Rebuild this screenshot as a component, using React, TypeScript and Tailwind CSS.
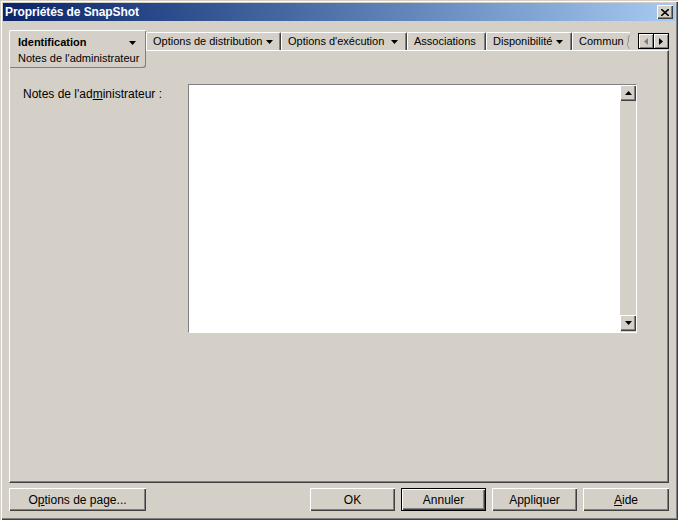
import React from 'react';

const font = { fontFamily: '"Liberation Sans", Arial, sans-serif' };

function Caret({ muted = false }: { muted?: boolean }) {
  return (
    <svg width="7" height="4" viewBox="0 0 7 4" className="shrink-0">
      <path d="M0 0h7L3.5 4z" fill={muted ? '#808080' : '#000'} />
    </svg>
  );
}

function Tab({ label, w, caret = false }: { label: string; w: string; caret?: boolean }) {
  return (
    <div
      className={`${w} h-[18px] flex items-center justify-between gap-[4px] pl-[6px] pr-[8px] border-l border-t border-r border-l-white border-t-white border-r-[#404040] rounded-t-[2px] shadow-[inset_-1px_0_#808080] shrink-0`}
    >
      <span className="whitespace-nowrap">{label}</span>
      {caret && <Caret />}
    </div>
  );
}

function Button({ children, w, isDefault = false }: { children: React.ReactNode; w: string; isDefault?: boolean }) {
  return (
    <div
      className={`${w} h-[23px] flex items-center justify-center ${
        isDefault
          ? 'border border-black shadow-[inset_1px_1px_#fff,inset_-1px_-1px_#404040,inset_-2px_-2px_#808080]'
          : 'shadow-[inset_1px_1px_#fff,inset_-1px_-1px_#404040,inset_-2px_-2px_#808080]'
      }`}
    >
      {children}
    </div>
  );
}

function ScrollBtn({ up }: { up: boolean }) {
  return (
    <div className="w-[16px] h-[16px] flex items-center justify-center shadow-[inset_1px_1px_#fff,inset_-1px_-1px_#404040,inset_-2px_-2px_#808080]">
      <svg width="7" height="4" viewBox="0 0 7 4">
        <path d={up ? 'M0 4h7L3.5 0z' : 'M0 0h7L3.5 4z'} fill="#000" />
      </svg>
    </div>
  );
}

export default function App() {
  return (
    <div
      style={font}
      className="w-[678px] h-[520px] bg-[#d4d0c8] text-[11px] text-black p-[3px] flex flex-col shadow-[inset_1px_1px_#d4d0c8,inset_2px_2px_#fff,inset_-1px_-1px_#404040,inset_-2px_-2px_#808080]"
    >
      {/* title bar */}
      <div className="h-[18px] flex items-center justify-between pl-[2px] pr-[2px] bg-gradient-to-r from-[#0a246a] to-[#a6caf0]">
        <span className="text-white font-bold text-[12px] tracking-[-0.1px]">Propriétés de SnapShot</span>
        <div className="w-[16px] h-[14px] bg-[#d4d0c8] flex items-center justify-center shadow-[inset_1px_1px_#fff,inset_-1px_-1px_#404040,inset_-2px_-2px_#808080]">
          <svg width="8" height="7" viewBox="0 0 8 7">
            <path d="M0 0l8 7M8 0L0 7" stroke="#000" strokeWidth="1.6" />
          </svg>
        </div>
      </div>

      <div className="flex-1 flex flex-col px-[6px] pt-[9px] pb-[6px]">
        {/* tab strip */}
        <div className="flex h-[38px]">
          <div className="w-[137px] h-full flex flex-col pl-[8px] pr-[9px] pt-[4px] border-l border-t border-l-white border-t-white rounded-tl-[2px] rounded-br-[3px] shadow-[inset_-1px_-1px_#808080] shrink-0">
            <div className="flex items-center justify-between h-[15px] pr-[1px]">
              <span className="font-bold">Identification</span>
              <Caret />
            </div>
            <div className="h-[16px] flex items-center whitespace-nowrap">Notes de l'administrateur</div>
          </div>
          <div className="flex-1 flex flex-col min-w-0">
            <div className="h-[20px] flex items-end overflow-hidden">
              <Tab label="Options de distribution" w="w-[135px]" caret />
              <Tab label="Options d'exécution" w="w-[126px]" caret />
              <Tab label="Associations" w="w-[79px]" />
              <Tab label="Disponibilité" w="w-[86px]" caret />
              <div className="w-[58px] h-[18px] flex items-center pl-[6px] border-l border-t border-l-white border-t-white shrink-0">
                <span className="whitespace-nowrap">Commun</span>
                <svg width="4" height="16" viewBox="0 0 4 16" className="ml-[3px]">
                  <path d="M3 0C0 3 3 6 1 9S2 14 3 16" fill="none" stroke="#808080" />
                </svg>
              </div>
              <div className="flex-1" />
              <div className="flex border border-black mb-[1px] shrink-0">
                <div className="w-[14px] h-[14px] flex items-center justify-center shadow-[inset_1px_1px_#fff,inset_-1px_-1px_#808080]">
                  <svg width="4" height="7" viewBox="0 0 4 7">
                    <path d="M4 0v7L0 3.5z" fill="#808080" />
                  </svg>
                </div>
                <div className="w-[15px] h-[14px] flex items-center justify-center border-l border-black shadow-[inset_1px_1px_#fff,inset_-1px_-1px_#808080]">
                  <svg width="4" height="7" viewBox="0 0 4 7">
                    <path d="M0 0v7L4 3.5z" fill="#000" />
                  </svg>
                </div>
              </div>
            </div>
            <div className="flex-1 border-t border-r border-t-white border-r-[#404040] shadow-[inset_-1px_0_#808080]" />
          </div>
        </div>

        {/* panel body */}
        <div className="flex-1 flex items-start pl-[13px] pr-[31px] pt-[16px] border-l border-r border-b border-l-white border-r-[#404040] border-b-[#404040] shadow-[inset_-1px_-1px_#808080]">
          <div className="w-[165px] pt-[3px] text-[12px] leading-[14px] whitespace-nowrap">
            Notes de l'ad<span className="underline">m</span>inistrateur :
          </div>
          <div className="flex-1 h-[249px] flex bg-white border-t border-l border-t-[#808080] border-l-[#808080] border-b border-r border-b-white border-r-white">
            <div className="flex-1" />
            <div className="w-[16px] flex flex-col justify-between bg-[#d4d0c8] border-r border-b border-[#d4d0c8]">
              <ScrollBtn up />
              <ScrollBtn up={false} />
            </div>
          </div>
        </div>

        {/* buttons */}
        <div className="flex items-center mt-[5px] text-[12px]">
          <Button w="w-[137px]">
            <span>
              O<span className="underline">p</span>tions de page...
            </span>
          </Button>
          <div className="flex-1" />
          <div className="flex gap-[6px]">
            <Button w="w-[85px]">OK</Button>
            <Button w="w-[85px]" isDefault>
              Annuler
            </Button>
            <Button w="w-[85px]">Appliquer</Button>
            <Button w="w-[86px]">
              <span>
                <span className="underline">A</span>ide
              </span>
            </Button>
          </div>
        </div>
      </div>
    </div>
  );
}
